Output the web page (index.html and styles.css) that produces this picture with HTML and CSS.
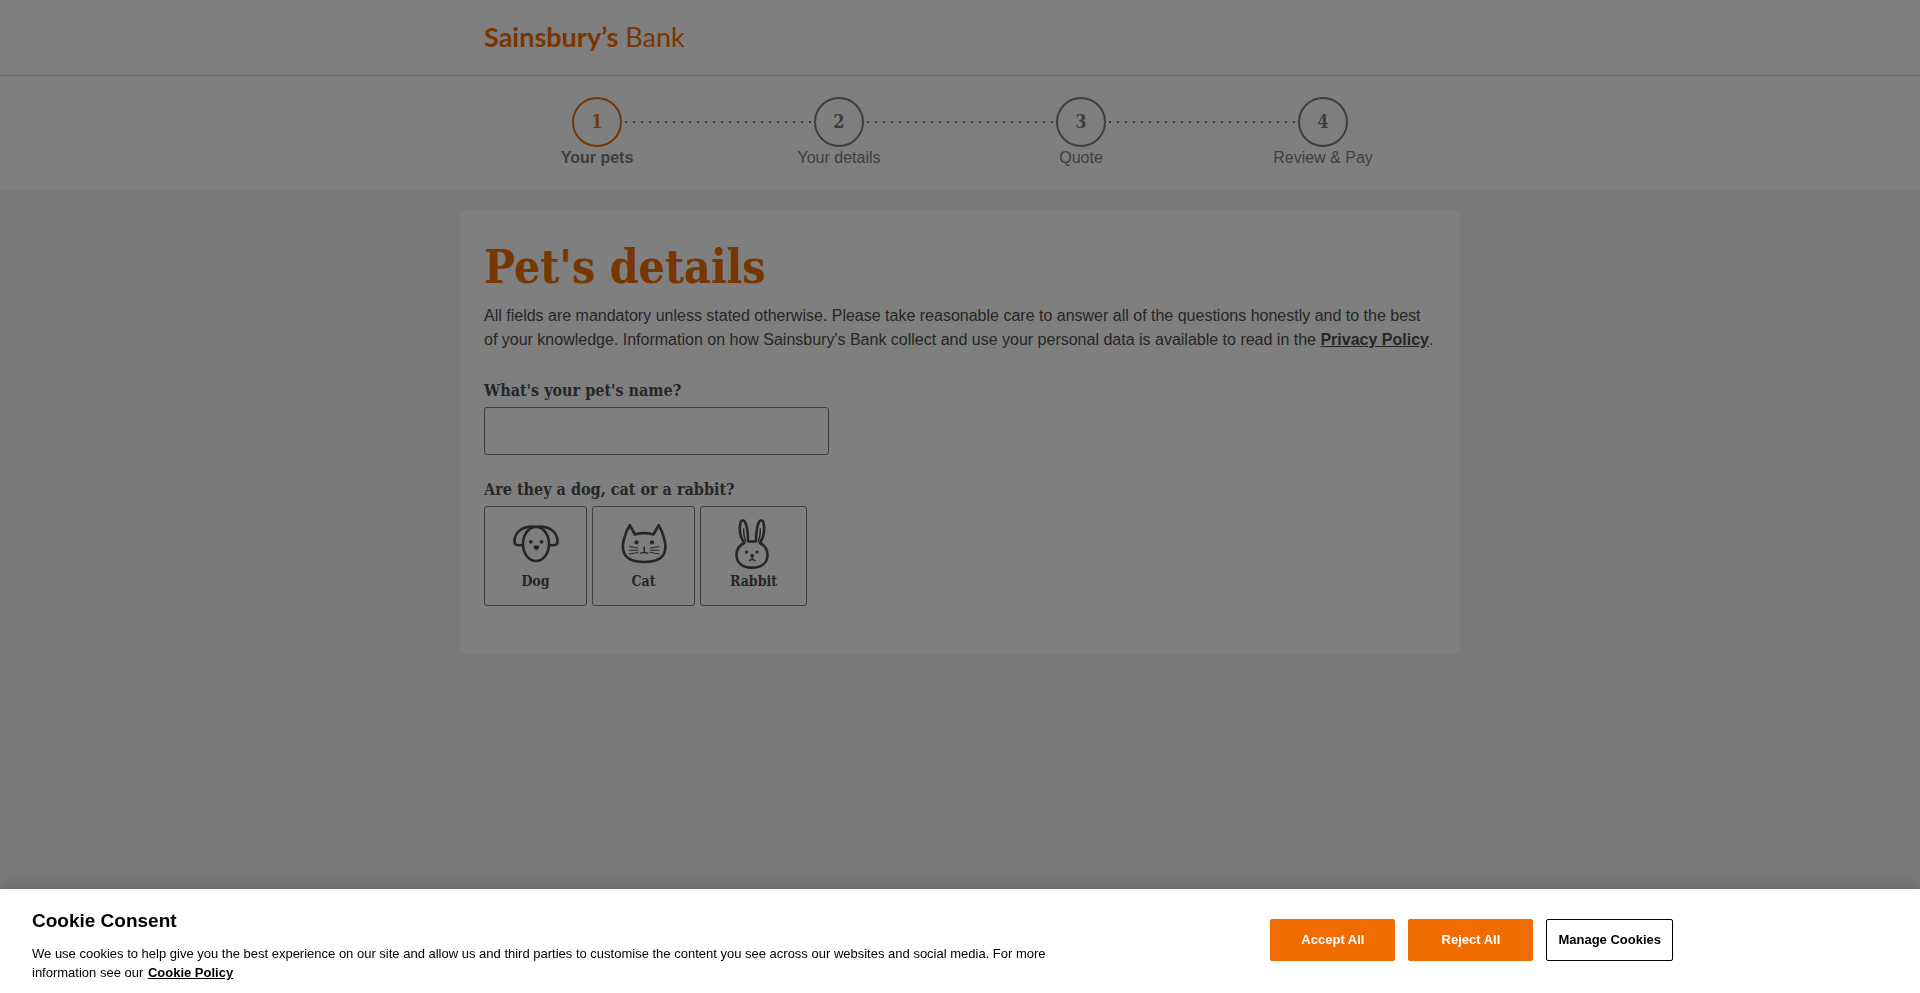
FILE: index.html
```html
<!DOCTYPE html>
<html lang="en">
<head>
<meta charset="utf-8">
<meta name="viewport" content="width=device-width, initial-scale=1">
<title>Pet's details - Sainsbury's Bank</title>
<link rel="stylesheet" href="styles.css">
</head>
<body>
<header class="header">
  <div class="header-inner">
    <a class="logo" href="#"><span class="logo-main">Sainsbury’s</span> <span class="logo-sub">Bank</span></a>
  </div>
</header>
<nav class="progress" aria-label="Progress">
  <ol class="steps">
    <li class="step step-active"><div class="step-track"><span class="step-number">1</span></div><span class="step-label">Your pets</span></li>
    <li class="step"><div class="step-track"><span class="step-number">2</span></div><span class="step-label">Your details</span></li>
    <li class="step"><div class="step-track"><span class="step-number">3</span></div><span class="step-label">Quote</span></li>
    <li class="step"><div class="step-track"><span class="step-number">4</span></div><span class="step-label">Review &amp; Pay</span></li>
  </ol>
</nav>
<main class="card">
  <h1 class="title">Pet's details</h1>
  <p class="intro">All fields are mandatory unless stated otherwise. Please take reasonable care to answer all of the questions honestly and to the best of your knowledge. Information on how Sainsbury's Bank collect and use your personal data is available to read in the <a class="link" href="#">Privacy Policy</a>.</p>
  <form class="form">
    <div class="field">
      <label class="question" for="pet-name">What's your pet's name?</label>
      <input class="text-input" type="text" id="pet-name">
    </div>
    <fieldset class="field">
      <legend class="question">Are they a dog, cat or a rabbit?</legend>
      <div class="options">
        <label class="option">
          <input class="option-input" type="radio" name="species" value="dog">
          <svg class="icon" viewBox="0 0 50 50" aria-hidden="true">
            <path d="M25 8C33 8 38 16.500 38 25C38 35 32 42 25 42C18 42 12 35 12 25C12 16.500 17 8 25 8Z"/>
            <path d="M25 7.800C12 6.300 3.500 13 3.500 22.500C3.500 26 6 26.800 12 26M25 7.800C38 6.300 46.500 13 46.500 22.500C46.500 26 44 26.800 38 26"/>
            <g class="icon-fill"><circle cx="19.800" cy="22.800" r="1.900"/><circle cx="30.500" cy="22.800" r="1.900"/><path d="M22.500 27Q25.200 25.500 28.200 27Q29 29.500 25.400 31.300Q21.800 29.500 22.500 27Z"/></g>
          </svg>
          <span>Dog</span>
        </label>
        <label class="option">
          <input class="option-input" type="radio" name="species" value="cat">
          <svg class="icon" viewBox="0 0 50 50" aria-hidden="true">
            <path d="M10.800 6.200Q7 12 5.500 18.500C4 23 3.500 28 4.300 31.500C6 39.500 14 43 25.200 43C36.500 43 44.500 39.500 46 31.500C46.800 28 46.200 23 44.800 18.500Q43 12 39.700 6.200L34.500 15.500Q25.200 12.800 16 15.500Z"/>
            <g class="icon-thin"><path d="M19 29L10.500 27.500M19 31.200H10.500M19 33.500L10.500 35M31.500 29L40 27.500M31.500 31.200H40M31.500 33.500L40 35"/></g>
            <path class="icon-mid" d="M25.200 28V32.800Q24.500 34.300 21.800 34M25.200 32.800Q26 34.300 28.700 34"/>
            <g class="icon-fill"><circle cx="17.500" cy="23.300" r="2.100"/><circle cx="33" cy="23.300" r="2.100"/></g>
          </svg>
          <span>Cat</span>
        </label>
        <label class="option">
          <input class="option-input" type="radio" name="species" value="rabbit">
          <svg class="icon" viewBox="2 0 50 50" aria-hidden="true">
            <path d="M17.200 24C13.300 18 12 10 13.500 3.500C14.200 .8 17 .8 18.200 3.200C20.300 8 21.200 15 21 22.500H29C28.800 15 30 8 31.800 3.200C33 .8 35.800 .8 36.500 3.500C38 10 36.700 18 32.800 24C38 26.500 40.500 31 40.500 36C40.500 44.500 34 48.600 25 48.600C16 48.600 9.500 44.500 9.500 36C9.500 31 12 26.500 17.200 24Z"/>
            <g class="icon-mid"><path d="M16.600 10C16.600 14.500 17.200 18.500 18.400 22M33.400 10C33.400 14.500 32.800 18.500 31.600 22M25.200 36V40.500M22.500 41.500Q25.200 39.300 27.900 41.500"/></g>
            <g class="icon-fill"><circle cx="19.500" cy="33" r="1.600"/><circle cx="30" cy="33" r="1.600"/><path d="M23 36Q25.200 34.500 27.500 36Q27 38.500 25.200 38.800Q23.500 38.500 23 36Z"/></g>
          </svg>
          <span>Rabbit</span>
        </label>
      </div>
    </fieldset>
  </form>
</main>
<div class="overlay"></div>
<section class="cookie" role="dialog" aria-labelledby="cookie-title">
  <div class="cookie-copy">
    <h2 class="cookie-title" id="cookie-title">Cookie Consent</h2>
    <p class="cookie-text">We use cookies to help give you the best experience on our site and allow us and third parties to customise the content you see across our websites and social media. For more information see our <a class="cookie-link" href="#">Cookie Policy</a></p>
  </div>
  <div class="cookie-actions">
    <button class="button button-primary" type="button">Accept All</button>
    <button class="button button-primary" type="button">Reject All</button>
    <button class="button button-outline" type="button">Manage Cookies</button>
  </div>
</section>
</body>
</html>
```
FILE: styles.css
```css
:root {
  --orange: #f06c00;
  --text: #4c4c4c;
  --muted: #7c7c7c;
  --display: "DejaVu Serif Condensed", "DejaVu Serif", serif;
}
* { box-sizing: border-box; }
body {
  margin: 0;
  min-height: 100vh;
  background: #f2f2f2;
  color: var(--text);
  font: 16px/24px "Liberation Sans", Arial, sans-serif;
}
.header {
  background: #fff;
  border-bottom: 1px solid #d0d0d0;
}
.header-inner {
  max-width: 1000px;
  margin: 0 auto;
  padding: 19px 24px 20px;
}
.logo {
  display: flex;
  gap: 7px;
  color: var(--orange);
  font: 27px/36px Lato, "Open Sans", sans-serif;
  text-decoration: none;
}
.logo-main { font-weight: 700; }
.progress {
  background: #fff;
  padding: 21px 0;
}
.steps {
  display: grid;
  grid-template-columns: repeat(4, 1fr);
  max-width: 968px;
  margin: 0 auto;
  padding: 0;
  list-style: none;
}
.step {
  color: var(--muted);
  line-height: 22px;
  text-align: center;
}
.step-track {
  display: flex;
  align-items: center;
}
.step-track::before,
.step-track::after {
  content: "";
  flex: 1;
  height: 2px;
  background: repeating-linear-gradient(90deg, transparent 0 3px, currentColor 3px 5px, transparent 5px 8px);
}
.step:first-child .step-track::before,
.step:last-child .step-track::after { background: none; }
.step-number {
  display: grid;
  place-items: center;
  width: 50px;
  height: 50px;
  border: 2px solid currentColor;
  border-radius: 50%;
  font: 700 18px/24px var(--display);
}
.step-active .step-number { color: var(--orange); }
.step-active .step-label { font-weight: 700; }
.card {
  max-width: 1000px;
  margin: 20px auto;
  padding: 26px 24px 48px;
  background: #fff;
}
.title {
  margin: 0 0 6px;
  color: var(--orange);
  font: 700 46px/62px var(--display);
}
.intro { margin: 0 0 27px; }
.link {
  color: inherit;
  font-weight: 700;
}
.field {
  margin: 0 0 23px;
  padding: 0;
  border: 0;
}
.field:last-child { margin: 0; }
.question {
  display: block;
  padding: 0 0 4px;
  font: 700 16px/24px var(--display);
}
.text-input {
  display: block;
  width: 100%;
  max-width: 345px;
  height: 48px;
  padding: 0 12px;
  border: 1px solid var(--muted);
  border-radius: 3px;
  background: #fff;
  font: inherit;
}
.options {
  display: flex;
  flex-wrap: wrap;
  gap: 5px;
}
.option {
  display: flex;
  flex-direction: column;
  align-items: center;
  min-width: 103px;
  min-height: 100px;
  padding: 12px 25px;
  border: 1px solid var(--muted);
  border-radius: 3px;
  font: 700 14px/24px var(--display);
  cursor: pointer;
}
.option:last-child { min-width: 107px; }
.option-input {
  appearance: none;
  width: 0;
  height: 0;
  margin: 0;
}
.icon {
  width: 50px;
  height: 50px;
  fill: none;
  stroke: currentColor;
  stroke-width: 2.6;
  stroke-linejoin: round;
  stroke-linecap: round;
}
.icon-thin { stroke-width: 1; }
.icon-mid { stroke-width: 1.5; }
.icon-fill { fill: currentColor; stroke: none; }
.overlay {
  position: fixed;
  inset: 0;
  background: rgba(0, 0, 0, .5);
}
.cookie {
  position: fixed;
  inset: auto 0 0;
  display: grid;
  grid-template-columns: 63% auto;
  justify-content: space-between;
  padding: 19px 247px 11px 32px;
  background: #fff;
  color: #000;
  box-shadow: 0 0 18px rgba(0, 0, 0, .2);
}
.cookie-title {
  margin: 0 0 10px;
  font-size: 19px;
  line-height: 26px;
}
.cookie-text {
  margin: 0;
  font-size: 13px;
  line-height: 19px;
}
.cookie-link {
  margin-left: 1px;
  color: inherit;
  font-weight: 700;
}
.cookie-actions {
  display: flex;
  align-items: flex-start;
  gap: 13px;
  padding-top: 11px;
}
.button {
  min-width: 125px;
  height: 42px;
  padding: 0 11px;
  border: 1px solid var(--orange);
  border-radius: 2px;
  font: 700 13px/16px "Liberation Sans", Arial, sans-serif;
}
.button-primary { background: var(--orange); color: #fff; }
.button-outline { min-width: 126px; border-color: #000; background: #fff; color: #000; }
@media (max-width: 1500px) {
  .cookie { padding-right: 32px; }
}
@media (max-width: 1000px) {
  .cookie { grid-template-columns: 1fr; }
}
```
